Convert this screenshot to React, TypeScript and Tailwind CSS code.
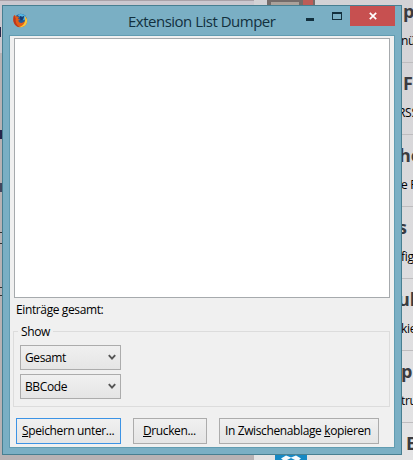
import type { ReactNode } from "react"

const entries = [
  { title: "p", titlePad: "pl-[149px]", text: "nü", textPad: "pl-[147px]" },
  { title: "F", titlePad: "pl-[149px]", text: "RSS", textPad: "pl-[144px]" },
  { title: "he", titlePad: "pl-[145px]", text: "e F", textPad: "pl-[147px]" },
  { title: "s", titlePad: "pl-[144px]", text: "fig", textPad: "pl-[147px]" },
  { title: "ul", titlePad: "pl-[144px]", text: "kie", textPad: "pl-[147px]" },
  { title: "p", titlePad: "pl-[147px]", text: "tru", textPad: "pl-[147px]" },
  { title: "E", titlePad: "pl-[152px]", text: "", textPad: "pl-[147px]" },
]

function FirefoxIcon() {
  return (
    <svg width="15" height="15" viewBox="0 0 16 16" className="shrink-0">
      <circle cx="8.3" cy="7.2" r="6.5" fill="#245b98" />
      <path d="M5 2C8 0 12 1 14 4L12 8 9 6Z" fill="#55b9e4" />
      <path d="M7 3l3 1 2-1-1 4-3 1Z" fill="#173b72" />
      <path
        d="M1.2 2.2 3.5 3.5 6.5 4.2 5.2 6 7.5 7.2 5.6 8.1C6 10.8 9.5 11.5 12 9.4 13.4 8 13.3 5.5 12.6 3.5 16 6 16 11 12.6 13.7 9.5 16.2 4.5 15.6 2 12.2 0 9.5-.1 5.5 1.2 2.2Z"
        fill="#e35d16"
      />
      <path d="M12.6 3.5C16 6 16 11 12.6 13.7 10.7 15.1 8.5 15.4 6.5 14.9 11 14.2 14.2 9.5 12.6 3.5Z" fill="#f6c83e" />
      <path d="M1.2 2.2C-.1 5.5 0 9.5 2 12.2 3.3 14 5.1 14.9 7 15 4.2 13.2 2 9.5 3 6Z" fill="#bb371f" />
    </svg>
  )
}

function AddonPage() {
  return (
    <div className="flex h-full">
      <div className="flex w-[254px] flex-col border-t border-[#aaa2a8] bg-[#b7b2b4]">
        <div className="h-[52px] bg-[#cbc8cf]">
          <div className="mt-[26px] h-2.5 w-px bg-[#28284b]" />
        </div>
        <div className="mt-[77px] h-[9px] w-[2px] bg-[#25264d]" />
        <div className="mt-[44px] h-[9px] w-[2px] bg-[#43455d]" />
        <div className="mt-[40px] h-px w-[2px] bg-[#333]" />
        <div className="mt-[10px] h-px w-[2px] bg-[#333]" />
        <div className="mt-[43px] h-px w-[2px] bg-[#333]" />
        <div className="mt-[7px] h-px w-[2px] bg-[#333]" />
      </div>
      <div className="relative w-[159px] overflow-hidden bg-linear-to-b from-[#d3d2d5] to-[#e4e4e5]">
        <svg width="48" height="5" className="absolute left-[13px] top-0">
          <path d="M0 0h48v5H0z" fill="#746b69" />
          <path d="M4 2h28v3H4z" fill="#aaa19a" />
          <path d="M36 0h10v5H36z" fill="#bd5c57" />
        </svg>
        <svg width="32" height="5" viewBox="0 0 32 5" className="absolute bottom-0 left-[21px]">
          <path d="M0 0h32v5H0z" fill="#1689c4" />
          <path d="m6 3.5 5-3 5 2 5-2 5 3L24 5h-4l-4-2-4 2H8Z" fill="#f5fafc" />
        </svg>
        <div className="mt-[-9px]">
          {entries.map((entry, index) => (
            <div
              key={index}
              className="h-[72px] border-b border-[#bebdbf] whitespace-nowrap"
            >
              <div className={`${entry.titlePad} pt-[7px] text-[18px] leading-[26px] font-bold text-[#3b3b40]`}>
                {entry.title}
              </div>
              <div className={`${entry.textPad} pt-[8px] text-[12px] leading-[18px] tracking-[-0.3px]`}>
                {entry.text}
              </div>
            </div>
          ))}
        </div>
      </div>
    </div>
  )
}

function TitleBar() {
  return (
    <div className="flex h-[29px] shrink-0">
      <div className="flex w-[116px] pl-[4px] pt-[7px]">
        <FirefoxIcon />
      </div>
      <h1 className="w-[172px] whitespace-nowrap pt-[4px] pl-[3px] text-[15px] leading-[22px] tracking-[-0.5px] text-[#12303e]">
        Extension List Dumper
      </h1>
      <div className="flex w-[50px] gap-[18px] pl-[10px]">
        <div className="mt-3 ml-[-1px] h-[3px] w-2 shrink-0 bg-[#12303e]" />
        <div className="mt-[6px] h-[8px] w-[10px] shrink-0 border border-t-2 border-[#12303e]" />
      </div>
      <button className="mr-0 ml-auto flex h-[20px] w-[45px] shrink-0 items-center justify-center bg-[#c75050]">
        <svg width="8" height="8" viewBox="0 0 8 8">
          <path d="m.8.8 6.4 6.4m0-6.4L.8 7.2" stroke="white" strokeWidth="1.7" />
        </svg>
      </button>
    </div>
  )
}

function Select({ children }: { children: ReactNode }) {
  return (
    <button className="flex h-[25px] w-[101px] items-center justify-between border border-[#acacac] bg-linear-to-b from-[#f0f0f0] to-[#e5e5e5] pr-1 pl-1">
      <span>{children}</span>
      <svg width="8" height="7" viewBox="0 0 8 7">
        <path d="m.8 1.2 3.2 3.5 3.2-3.5" fill="none" stroke="#555" strokeWidth="1.9" />
      </svg>
    </button>
  )
}

function Button({ className, children }: { className: string; children: ReactNode }) {
  return (
    <button className={`h-[26px] shrink-0 border bg-linear-to-b from-[#f0f0f0] to-[#e5e5e5] text-left whitespace-nowrap ${className}`}>
      {children}
    </button>
  )
}

export default function App() {
  return (
    <div className="relative h-[460px] w-[413px] overflow-hidden bg-[#dad9da] font-['Open_Sans','Noto_Sans',sans-serif] text-black">
      <AddonPage />
      <main className="absolute left-[2px] top-[5px] flex h-[450px] w-[400px] flex-col border border-[#477f91] bg-[#7aafc4] px-[6px] pb-[6px] text-[12px] leading-[16px] tracking-[-0.38px]">
        <TitleBar />
        <div className="flex grow flex-col border border-[#619cb1] bg-[#f0f0f0] px-1 pt-[2px]">
          <div className="h-[260px] shrink-0 border border-[#a6aaad] bg-white" />
          <p className="mt-1 pl-[2px]">Einträge gesamt:</p>
          <fieldset className="relative mt-[13px] ml-[-1px] h-[76px] shrink-0 border border-[#dcdcdc] pt-[13px] pl-[6px]">
            <legend className="absolute left-[4px] top-[-8px] bg-[#f0f0f0] px-[3px]">Show</legend>
            <div className="flex flex-col gap-1">
              <Select>Gesamt</Select>
              <Select>BBCode</Select>
            </div>
          </fieldset>
          <div className="mt-[11px] flex pl-[2px]">
            <Button className="w-[105px] border-[#3c93e5] pl-[5px]"><u>S</u>peichern unter...</Button>
            <Button className="ml-3 w-[74px] border-[#acacac] pl-[9px]"><u>D</u>rucken...</Button>
            <Button className="ml-3 w-[160px] border-[#acacac] pl-[5px]">In Zwischenablage <u>k</u>opieren</Button>
          </div>
        </div>
      </main>
    </div>
  )
}
